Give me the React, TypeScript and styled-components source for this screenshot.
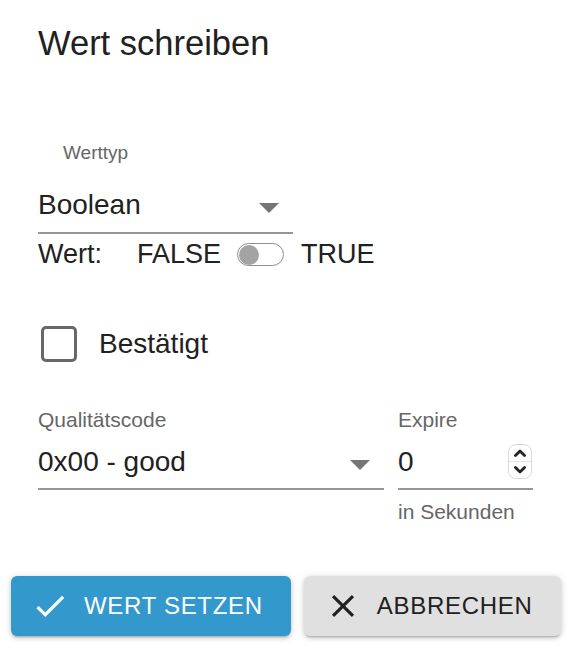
import React, { useState } from "react";
import styled, { createGlobalStyle } from "styled-components";

const GlobalStyle = createGlobalStyle`
  html, body {
    margin: 0;
    padding: 0;
    background: #ffffff;
  }
  body {
    font-family: "Liberation Sans", Arial, Helvetica, sans-serif;
    color: #212121;
  }
`;

const Dialog = styled.div`
  width: 574px;
  height: 648px;
  box-sizing: border-box;
  padding-top: 23px;
  display: flex;
  flex-direction: column;
  background: #ffffff;
`;

const Title = styled.h2`
  margin: 0 0 0 38px;
  font-size: 34.5px;
  line-height: 40px;
  font-weight: 400;
  color: #212121;
`;

const Content = styled.div`
  display: flex;
  flex-direction: column;
  padding: 0 41px 0 38px;
`;

const ShrunkLabel = styled.div`
  margin-top: 79px;
  padding-left: 25px;
  font-size: 19px;
  line-height: 22px;
  color: #666666;
`;

const SelectBox = styled.div<{ $width: number; $top: number }>`
  width: ${(p) => p.$width}px;
  margin-top: ${(p) => p.$top}px;
  box-sizing: border-box;
  display: flex;
  align-items: flex-start;
  justify-content: space-between;
  padding: 0 14px 0 0;
  border-bottom: 2px solid #969696;
  height: 46px;
  font-size: 28px;
  line-height: 34px;
  color: #212121;
`;

const ArrowIcon = styled.svg`
  width: 20px;
  height: 10px;
  margin-top: 15px;
  flex: none;
`;

const ValueRow = styled.div`
  margin-top: 4px;
  display: flex;
  align-items: center;
  height: 32px;
  font-size: 27px;
  line-height: 32px;
  color: #212121;
`;

const ValueCaption = styled.span`
  margin-right: 35px;
`;

const Track = styled.span`
  position: relative;
  box-sizing: border-box;
  width: 47px;
  height: 23px;
  margin: 1px 17px 0 16px;
  border: 1.5px solid #8e8e8e;
  border-radius: 12px;
  background: #ffffff;
  flex: none;
`;

const Thumb = styled.span`
  position: absolute;
  left: 1px;
  top: 50%;
  width: 20px;
  height: 20px;
  margin-top: -10px;
  border-radius: 50%;
  background: #a3a3a3;
`;

const CheckRow = styled.label`
  margin-top: 56px;
  display: flex;
  align-items: center;
  height: 36px;
  font-size: 28px;
  line-height: 34px;
  color: #212121;
  cursor: pointer;
`;

const CheckBox = styled.span`
  box-sizing: border-box;
  width: 36px;
  height: 36px;
  margin: 0 22px 0 3px;
  border: 3.5px solid #686868;
  border-radius: 5px;
  flex: none;
`;

const FieldsRow = styled.div`
  margin-top: 45px;
  display: flex;
  gap: 14px;
  align-items: flex-start;
`;

const Field = styled.div<{ $width: number }>`
  width: ${(p) => p.$width}px;
  display: flex;
  flex-direction: column;
`;

const FieldLabel = styled.div`
  font-size: 21px;
  line-height: 26px;
  color: #666666;
`;

const InputLine = styled.div`
  margin-top: 12px;
  box-sizing: border-box;
  height: 45px;
  padding: 0 1px 9px 0;
  border-bottom: 2px solid #969696;
  display: flex;
  align-items: center;
  justify-content: space-between;
  font-size: 28px;
  line-height: 34px;
  color: #212121;
`;

const SelectLine = styled(InputLine)`
  padding-right: 14px;
  align-items: flex-start;
`;

const Spinner = styled.span`
  box-sizing: border-box;
  width: 24px;
  height: 35px;
  margin-top: -2px;
  border: 1px solid #dadada;
  border-radius: 8px;
  display: flex;
  flex-direction: column;
  background: #ffffff;
  flex: none;
`;

const SpinHalf = styled.span<{ $top?: boolean }>`
  flex: 1;
  display: flex;
  align-items: center;
  justify-content: center;
  border-bottom: ${(p) => (p.$top ? "1px solid #e2e2e2" : "none")};
`;

const Helper = styled.div`
  margin-top: 9px;
  font-size: 21px;
  line-height: 26px;
  color: #666666;
`;

const Actions = styled.div`
  margin: 51px 0 0 11px;
  display: flex;
  gap: 13px;
`;

const ActionButton = styled.button<{ $primary?: boolean }>`
  height: 60px;
  box-sizing: border-box;
  padding: 0 28px 0 20px;
  display: flex;
  align-items: center;
  gap: 15px;
  border: none;
  border-radius: 6px;
  background: ${(p) => (p.$primary ? "#3399cc" : "#e0e0e0")};
  color: ${(p) => (p.$primary ? "#ffffff" : "#212121")};
  font-family: "Liberation Sans", Arial, Helvetica, sans-serif;
  font-size: 24px;
  letter-spacing: 0.7px;
  text-transform: uppercase;
  box-shadow: 0 3px 2px -2px rgba(0, 0, 0, 0.2), 0 2px 4px 0 rgba(0, 0, 0, 0.14),
    0 1px 8px 0 rgba(0, 0, 0, 0.12);
  cursor: pointer;
`;

const ButtonIcon = styled.svg`
  width: 38px;
  height: 38px;
  flex: none;
  fill: currentColor;
`;

const DropArrow = () => (
  <ArrowIcon viewBox="0 0 20 10">
    <polygon points="0,0 20,0 10,10" fill="#757575" />
  </ArrowIcon>
);

const Chevron = ({ up }: { up?: boolean }) => (
  <svg width="12" height="8" viewBox="0 0 12 8">
    <polyline
      points={up ? "1.5,6.5 6,2 10.5,6.5" : "1.5,1.5 6,6 10.5,1.5"}
      fill="none"
      stroke="#222222"
      strokeWidth="2.8"
      strokeLinecap="round"
      strokeLinejoin="round"
    />
  </svg>
);

export default function App() {
  const [checked] = useState(false);
  return (
    <>
      <GlobalStyle />
      <Dialog>
        <Title>Wert schreiben</Title>
        <Content>
          <ShrunkLabel>Werttyp</ShrunkLabel>
          <SelectBox $width={255} $top={24}>
            <span>Boolean</span>
            <DropArrow />
          </SelectBox>
          <ValueRow>
            <ValueCaption>Wert:</ValueCaption>
            <span>FALSE</span>
            <Track>
              <Thumb />
            </Track>
            <span>TRUE</span>
          </ValueRow>
          <CheckRow>
            <CheckBox aria-checked={checked} />
            Bestätigt
          </CheckRow>
          <FieldsRow>
            <Field $width={346}>
              <FieldLabel>Qualitätscode</FieldLabel>
              <SelectLine>
                <span>0x00 - good</span>
                <DropArrow />
              </SelectLine>
            </Field>
            <Field $width={135}>
              <FieldLabel>Expire</FieldLabel>
              <InputLine>
                <span>0</span>
                <Spinner>
                  <SpinHalf $top>
                    <Chevron up />
                  </SpinHalf>
                  <SpinHalf>
                    <Chevron />
                  </SpinHalf>
                </Spinner>
              </InputLine>
              <Helper>in Sekunden</Helper>
            </Field>
          </FieldsRow>
        </Content>
        <Actions>
          <ActionButton $primary>
            <ButtonIcon viewBox="0 0 24 24">
              <path d="M9 16.17 4.83 12l-1.42 1.41L9 19 21 7l-1.41-1.41z" />
            </ButtonIcon>
            Wert setzen
          </ActionButton>
          <ActionButton>
            <ButtonIcon viewBox="0 0 24 24">
              <path d="M19 6.41 17.59 5 12 10.59 6.41 5 5 6.41 10.59 12 5 17.59 6.41 19 12 13.41 17.59 19 19 17.59 13.41 12z" />
            </ButtonIcon>
            Abbrechen
          </ActionButton>
        </Actions>
      </Dialog>
    </>
  );
}
